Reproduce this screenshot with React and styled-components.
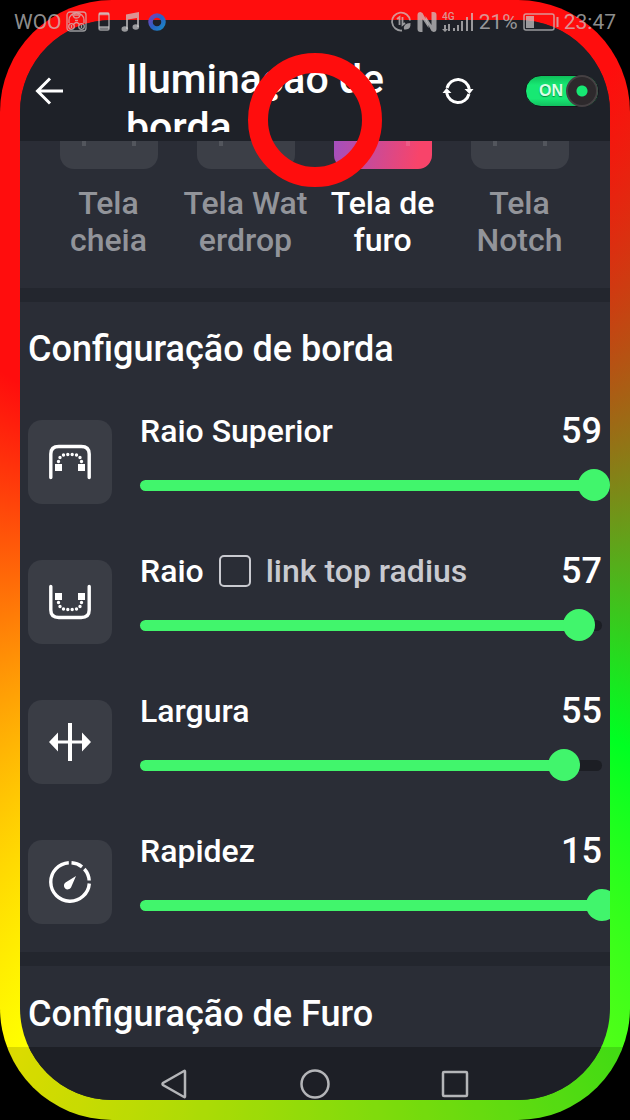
import { useState } from "react";
import styled, { createGlobalStyle } from "styled-components";

const settings = [
  { id: "top", label: "Raio Superior", value: 59, max: 60, icon: <TopRadiusIcon /> },
  { id: "bottom", label: "Raio", value: 57, max: 60, icon: <BottomRadiusIcon />, link: true },
  { id: "width", label: "Largura", value: 55, max: 60, icon: <WidthIcon /> },
  { id: "speed", label: "Rapidez", value: 15, max: 15, icon: <SpeedIcon /> },
];

const screens = [
  { id: "full", lines: ["Tela", "cheia"] },
  { id: "water", lines: ["Tela Wat", "erdrop"] },
  { id: "hole", lines: ["Tela de", "furo"] },
  { id: "notch", lines: ["Tela", "Notch"] },
];

export default function App() {
  const [screen, setScreen] = useState("hole");
  return (
    <>
      <GlobalStyle />
      <Frame>
        <Screen>
          <Header>
            <IconButton aria-label="Voltar">
              <svg width="28" height="28" viewBox="0 0 28 28" fill="none" stroke="#fff" strokeWidth="3">
                <path d="M28 14H3M15 1.5L2.5 14L15 26.5" />
              </svg>
            </IconButton>
            <Title>Iluminação de borda</Title>
            <IconButton aria-label="Atualizar">
              <RefreshIcon />
            </IconButton>
            <Switch>
              <input type="checkbox" role="switch" aria-label="Iluminação" defaultChecked />
              <span>ON</span>
              <Knob />
            </Switch>
          </Header>
          <Screens>
            {screens.map((s) => (
              <ScreenOption key={s.id} $active={s.id === screen} onClick={() => setScreen(s.id)}>
                <Tile $active={s.id === screen}>
                  <i />
                  <i />
                </Tile>
                <span>
                  {s.lines[0]}
                  <br />
                  {s.lines[1]}
                </span>
              </ScreenOption>
            ))}
          </Screens>
          <Divider />
          <Section>
            <SectionTitle>Configuração de borda</SectionTitle>
            {settings.map((s) => (
              <Setting key={s.id} {...s} />
            ))}
          </Section>
          <Divider />
          <HoleSection>
            <SectionTitle>Configuração de Furo</SectionTitle>
          </HoleSection>
          <NavSpace />
        </Screen>
        <HoleLight />
      </Frame>
      <StatusBar />
      <NavBar>
        <button aria-label="Voltar">
          <svg width="30" height="30" viewBox="0 0 30 30">
            <path d="M25 2.5V27.5Q25 28.5 24 28L3 16Q2 15 3 14L24 2Q25 1.500 25 2.500Z" />
          </svg>
        </button>
        <button aria-label="Início">
          <svg width="30" height="30" viewBox="0 0 30 30">
            <circle cx="15" cy="15" r="13.500" />
          </svg>
        </button>
        <button aria-label="Recentes">
          <svg width="30" height="30" viewBox="0 0 30 30">
            <rect x="3" y="3" width="24" height="24" rx="1" />
          </svg>
        </button>
      </NavBar>
    </>
  );
}

function Setting({ id, label, value: initial, max, icon, link }) {
  const [value, setValue] = useState(initial);
  return (
    <Row>
      <IconBox>{icon}</IconBox>
      <Control>
        <RowHead>
          <label htmlFor={id}>{label}</label>
          {link && (
            <LinkLabel>
              <input type="checkbox" />
              link top radius
            </LinkLabel>
          )}
          <output htmlFor={id}>{value}</output>
        </RowHead>
        <Slider>
          <Track>
            <Fill style={{ width: `${(value / max) * 100}%` }} />
          </Track>
          <input
            id={id}
            type="range"
            min="0"
            max={max}
            value={value}
            onChange={(e) => setValue(Number(e.target.value))}
          />
        </Slider>
      </Control>
    </Row>
  );
}

function StatusBar() {
  return (
    <Status>
      <StatusGroup $gap="4px">
        <span>WOO</span>
        <svg width="21" height="21" viewBox="0 0 21 21" fill="none" stroke="currentColor" strokeWidth="1.300">
          <rect x="1" y="1" width="19" height="19" rx="3" />
          <path d="M3 12V9A7.500 7 0 0 1 18 9V12M7 3Q7 7 10.500 7Q14 7 14 3M8 4H13M9 9.500H12" />
          <circle cx="5.500" cy="15.500" r="2.800" />
          <circle cx="15.500" cy="15.500" r="2.800" />
          <path d="M5.500 14V17M15.500 14V17M8 13Q10.500 10 13 13" />
        </svg>
        <StatusIcon $w={26}>
          <svg width="12" height="19" viewBox="0 0 12 19" fill="none" stroke="currentColor" strokeWidth="1.500">
            <rect x="1" y="1" width="10" height="17" rx="1.500" />
            <path d="M1 2H11M1 15.500H11" strokeWidth="2.500" />
          </svg>
        </StatusIcon>
        <svg width="19" height="20" viewBox="0 0 19 20" fill="currentColor">
          <path d="M5 2.500L18 0V15H16V6L7 7.500V17H5Z" />
          <ellipse cx="3.800" cy="17" rx="3.300" ry="2.800" />
          <ellipse cx="14.800" cy="15" rx="3.300" ry="2.800" />
        </svg>
        <StatusIcon $w={26}>
          <svg width="18" height="18" viewBox="0 0 18 18" fill="none">
            <defs>
              <linearGradient id="dot" x1="0" y1="0" x2="1" y2="1">
                <stop offset="0" stopColor="#7a3fb8" />
                <stop offset="0.500" stopColor="#2962c4" />
                <stop offset="1" stopColor="#1a86c4" />
              </linearGradient>
            </defs>
            <circle cx="9" cy="9" r="6.500" stroke="url(#dot)" strokeWidth="4.500" />
          </svg>
        </StatusIcon>
      </StatusGroup>
      <StatusGroup $gap="5px">
        <svg width="21" height="21" viewBox="0 0 21 21" fill="none" stroke="currentColor" strokeWidth="1.800">
          <path d="M11 19.500A9 9 0 1 1 19 9.500" />
          <path d="M6 8L8.500 6V14M11.500 6V14L14 12" />
          <path d="M13 18.500Q12 12 19.500 12Q20 19 14 18.500Z" fill="currentColor" stroke="none" />
        </svg>
        <svg width="20" height="20" viewBox="0 0 19 20" fill="currentColor">
          <path d="M0 3Q0 0 3 0L5 1L11 12V16L5 7V20H3Q0 20 0 17Z" />
          <path d="M19 17Q19 20 16 20L14 19L8 8V4L14 13V0H16Q19 0 19 3Z" />
        </svg>
        <svg width="32" height="22" viewBox="0 0 32 22" fill="currentColor">
          <text x="0" y="9" fontSize="10" fontFamily="Roboto, sans-serif" fontWeight="500">4G</text>
          <path d="M2 14H4V18H6L3 21L0 18H2ZM6 13H8V20H6ZM11 17H13V20H11ZM15 14H17V20H15ZM19 10H21V20H19ZM24 6H26V20H24ZM29 2H31V20H29Z" />
        </svg>
        <span>21%</span>
        <svg width="36" height="18" viewBox="0 0 36 18" fill="none" stroke="currentColor" strokeWidth="1.500">
          <rect x="1" y="1" width="30" height="16" rx="2" />
          <path d="M3 3H11V15H3Z" fill="currentColor" stroke="none" />
          <path d="M34.500 4V14" strokeWidth="2" />
        </svg>
        <span>23:47</span>
      </StatusGroup>
    </Status>
  );
}

function RefreshIcon() {
  return (
    <svg width="32" height="28" viewBox="0 0 32 28" fill="none" stroke="#fff" strokeWidth="3">
      <path d="M5 11A11.500 12 0 0 1 27.300 12M27 17A11.500 12 0 0 1 4.700 16" />
      <path d="M22.500 12H31.500L27.500 17ZM0.500 16L4.500 11L9.500 16Z" fill="#fff" stroke="none" />
    </svg>
  );
}

function TopRadiusIcon() {
  return (
    <svg width="42" height="42" viewBox="0 0 42 42" fill="none" stroke="#fff" strokeWidth="3.400" strokeLinecap="round">
      <path d="M1.800 36.500V13Q1.800 5.500 9.800 5.500H32.200Q40.200 5.500 40.200 13V36.500" />
      <path d="M6 23H13V30H6ZM29 23H36V30H29Z" fill="#fff" stroke="none" />
      <path d="M9.500 20.500h0M11 16.500h0M14.500 14h0M18.800 13.500h0M23.200 13.500h0M27.500 14h0M31 16.500h0M32.500 20.500h0" />
    </svg>
  );
}

function BottomRadiusIcon() {
  return (
    <svg width="42" height="42" viewBox="0 0 42 42" fill="none" stroke="#fff" strokeWidth="3.400" strokeLinecap="round">
      <path d="M1.800 5.500V29Q1.800 36.500 9.800 36.500H32.200Q40.200 36.500 40.200 29V5.500" />
      <path d="M6 12H13V19H6ZM29 12H36V19H29Z" fill="#fff" stroke="none" />
      <path d="M9.500 21.500h0M11 25.500h0M14.500 28h0M18.800 28.500h0M23.200 28.500h0M27.500 28h0M31 25.500h0M32.500 21.500h0" />
    </svg>
  );
}

function WidthIcon() {
  return (
    <svg width="42" height="42" viewBox="0 0 42 42" fill="#fff">
      <path d="M19 2H23V40H19Z" />
      <path d="M0 21L9 11.500V19.500H33V11.500L42 21L33 30.500V22.500H9V30.500Z" />
    </svg>
  );
}

function SpeedIcon() {
  return (
    <svg width="42" height="42" viewBox="0 0 42 42" fill="none" stroke="#fff" strokeWidth="3.400">
      <path d="M40.300 22.500A19.300 19.300 0 1 1 19.800 1.700" />
      <path d="M22.500 1.800A19.300 19.300 0 0 1 33 5.800M35.300 8A19.300 19.300 0 0 1 40.200 19.500" />
      <path d="M27 15L22 26.500A3.800 3.800 0 1 1 16.500 21.500Z" fill="#fff" stroke="none" />
    </svg>
  );
}

const GlobalStyle = createGlobalStyle`
  * {
    box-sizing: border-box;
  }
  body {
    margin: 0;
    background: #000;
    color: #fff;
    font-family: Roboto, "Noto Sans", sans-serif;
    font-weight: 500;
    overflow: hidden;
  }
  button {
    padding: 0;
    border: none;
    background: none;
    color: inherit;
    font: inherit;
  }
`;
const Frame = styled.div`
  position: relative;
  display: flex;
  min-height: 100vh;
  padding: 20px;
  border-radius: 112px;
  overflow: hidden;
  background: conic-gradient(from 31deg, #ff0d0d, #00ff22 25%, #ffff00 50%, #ff0d0d 75%, #ff0d0d);
`;
const Screen = styled.main`
  flex: 1;
  min-width: 0;
  display: flex;
  flex-direction: column;
  border-radius: 92px;
  overflow: hidden;
  background: #2a2d36;
`;
const Header = styled.header`
  display: flex;
  align-items: center;
  height: 121px;
  padding: 20px 11px 0 15px;
  background: #1e2128;
`;
const IconButton = styled.button`
  display: flex;
`;
const Title = styled.h1`
  flex: 1;
  align-self: flex-start;
  height: 77px;
  margin: 15px 52px 0 63px;
  overflow: hidden;
  font-size: 41px;
  line-height: 48px;
  font-weight: 500;
`;
const Switch = styled.label`
  display: flex;
  align-items: center;
  justify-content: space-between;
  width: 74px;
  height: 32px;
  margin-left: 51px;
  padding-left: 10px;
  border: 1px solid #15171c;
  border-radius: 16px;
  background: linear-gradient(#0fbf5a, #17e873 30%, #17e873 75%, #12c060);
  font-family: "Liberation Sans", sans-serif;
  font-size: 16px;
  font-weight: 700;
  color: #d8ffe6;
  text-shadow: 0 1px 1px #0a8a40;
  input {
    appearance: none;
    width: 0;
    height: 0;
    margin: 0;
  }
`;
const Knob = styled.i`
  width: 32px;
  height: 32px;
  border: 2px solid #454043;
  border-radius: 50%;
  background: radial-gradient(circle, #17e873 5px, #2d292c 6px);
`;
const Screens = styled.section`
  display: grid;
  grid-template-columns: repeat(4, 1fr);
  height: 147px;
  padding: 0 22px 0 20px;
`;
const ScreenOption = styled.button`
  display: flex;
  flex-direction: column;
  align-items: center;
  gap: 16px;
  font-size: 32px;
  line-height: 37px;
  white-space: nowrap;
  color: ${({ $active }) => ($active ? "#fff" : "#92949a")};
`;
const Tile = styled.div`
  display: flex;
  justify-content: space-between;
  width: 98px;
  height: 28px;
  padding: 0 22px;
  border-radius: 0 0 14px 14px;
  background: ${({ $active }) => ($active ? "linear-gradient(100deg, #a44fbd, #f8446a 85%)" : "#3c3f47")};
  i {
    width: 4px;
    height: 5px;
    background: rgba(255, 255, 255, 0.12);
  }
`;
const Divider = styled.div`
  height: 14px;
  background: #23262e;
`;
const Section = styled.section`
  padding: 23px 8px 28px;
`;
const HoleSection = styled.section`
  flex: 1;
  padding: 24px 8px 8px;
`;
const SectionTitle = styled.h2`
  margin: 0;
  font-size: 36px;
  line-height: 48px;
  font-weight: 500;
`;
const Row = styled.div`
  display: flex;
  gap: 28px;
  height: 84px;
  margin-top: 56px;
  &:first-of-type {
    margin-top: 47px;
  }
`;
const IconBox = styled.div`
  flex: none;
  display: flex;
  align-items: center;
  justify-content: center;
  width: 84px;
  height: 84px;
  border-radius: 14px;
  background: #3a3d45;
`;
const Control = styled.div`
  flex: 1;
  min-width: 0;
  margin-top: -12px;
`;
const RowHead = styled.div`
  display: flex;
  align-items: center;
  height: 46px;
  font-size: 32px;
  output {
    margin-left: auto;
    font-size: 36px;
  }
`;
const LinkLabel = styled.label`
  display: flex;
  align-items: center;
  gap: 15px;
  margin-left: 15px;
  color: #c9cad0;
  input {
    appearance: none;
    width: 32px;
    height: 32px;
    margin: 0;
    border: 2px solid #c9cad0;
    border-radius: 5px;
  }
`;
const Slider = styled.div`
  display: grid;
  align-items: center;
  height: 32px;
  margin-top: 15px;
  input {
    grid-area: 1 / 1;
    appearance: none;
    height: 32px;
    margin: 0 -16px;
    background: none;
  }
  input::-webkit-slider-thumb {
    appearance: none;
    width: 32px;
    height: 32px;
    border-radius: 50%;
    background: #41f56c;
  }
`;
const Track = styled.div`
  grid-area: 1 / 1;
  height: 11px;
  border-radius: 6px;
  background: #1c1e24;
`;
const Fill = styled.div`
  height: 100%;
  border-radius: 6px;
  background: #41f56c;
`;
const NavSpace = styled.div`
  height: 53px;
  background: #22252d;
`;
// front camera ring, drawn over the page
const HoleLight = styled.div`
  position: absolute;
  top: 53px;
  left: 50%;
  width: 134px;
  height: 134px;
  margin-left: -67px;
  border: 20px solid #ff0d0d;
  border-radius: 50%;
`;
const Status = styled.div`
  position: absolute;
  top: 0;
  left: 0;
  right: 0;
  display: flex;
  justify-content: space-between;
  height: 43px;
  padding: 0 14px;
  color: rgba(205, 205, 205, 0.7);
  font-size: 21px;
  font-weight: 400;
`;
const StatusGroup = styled.div`
  display: flex;
  align-items: center;
  gap: ${({ $gap }) => $gap};
`;
const StatusIcon = styled.span`
  display: flex;
  justify-content: center;
  width: ${({ $w }) => $w}px;
`;
const NavBar = styled.nav`
  position: absolute;
  left: 0;
  right: 0;
  bottom: 0;
  display: flex;
  justify-content: center;
  height: 73px;
  background: rgba(0, 0, 0, 0.14);
  button {
    display: flex;
    align-items: center;
    justify-content: center;
    width: 140px;
  }
  svg {
    fill: none;
    stroke: #b4b5b8;
    stroke-width: 2.5;
  }
`;
